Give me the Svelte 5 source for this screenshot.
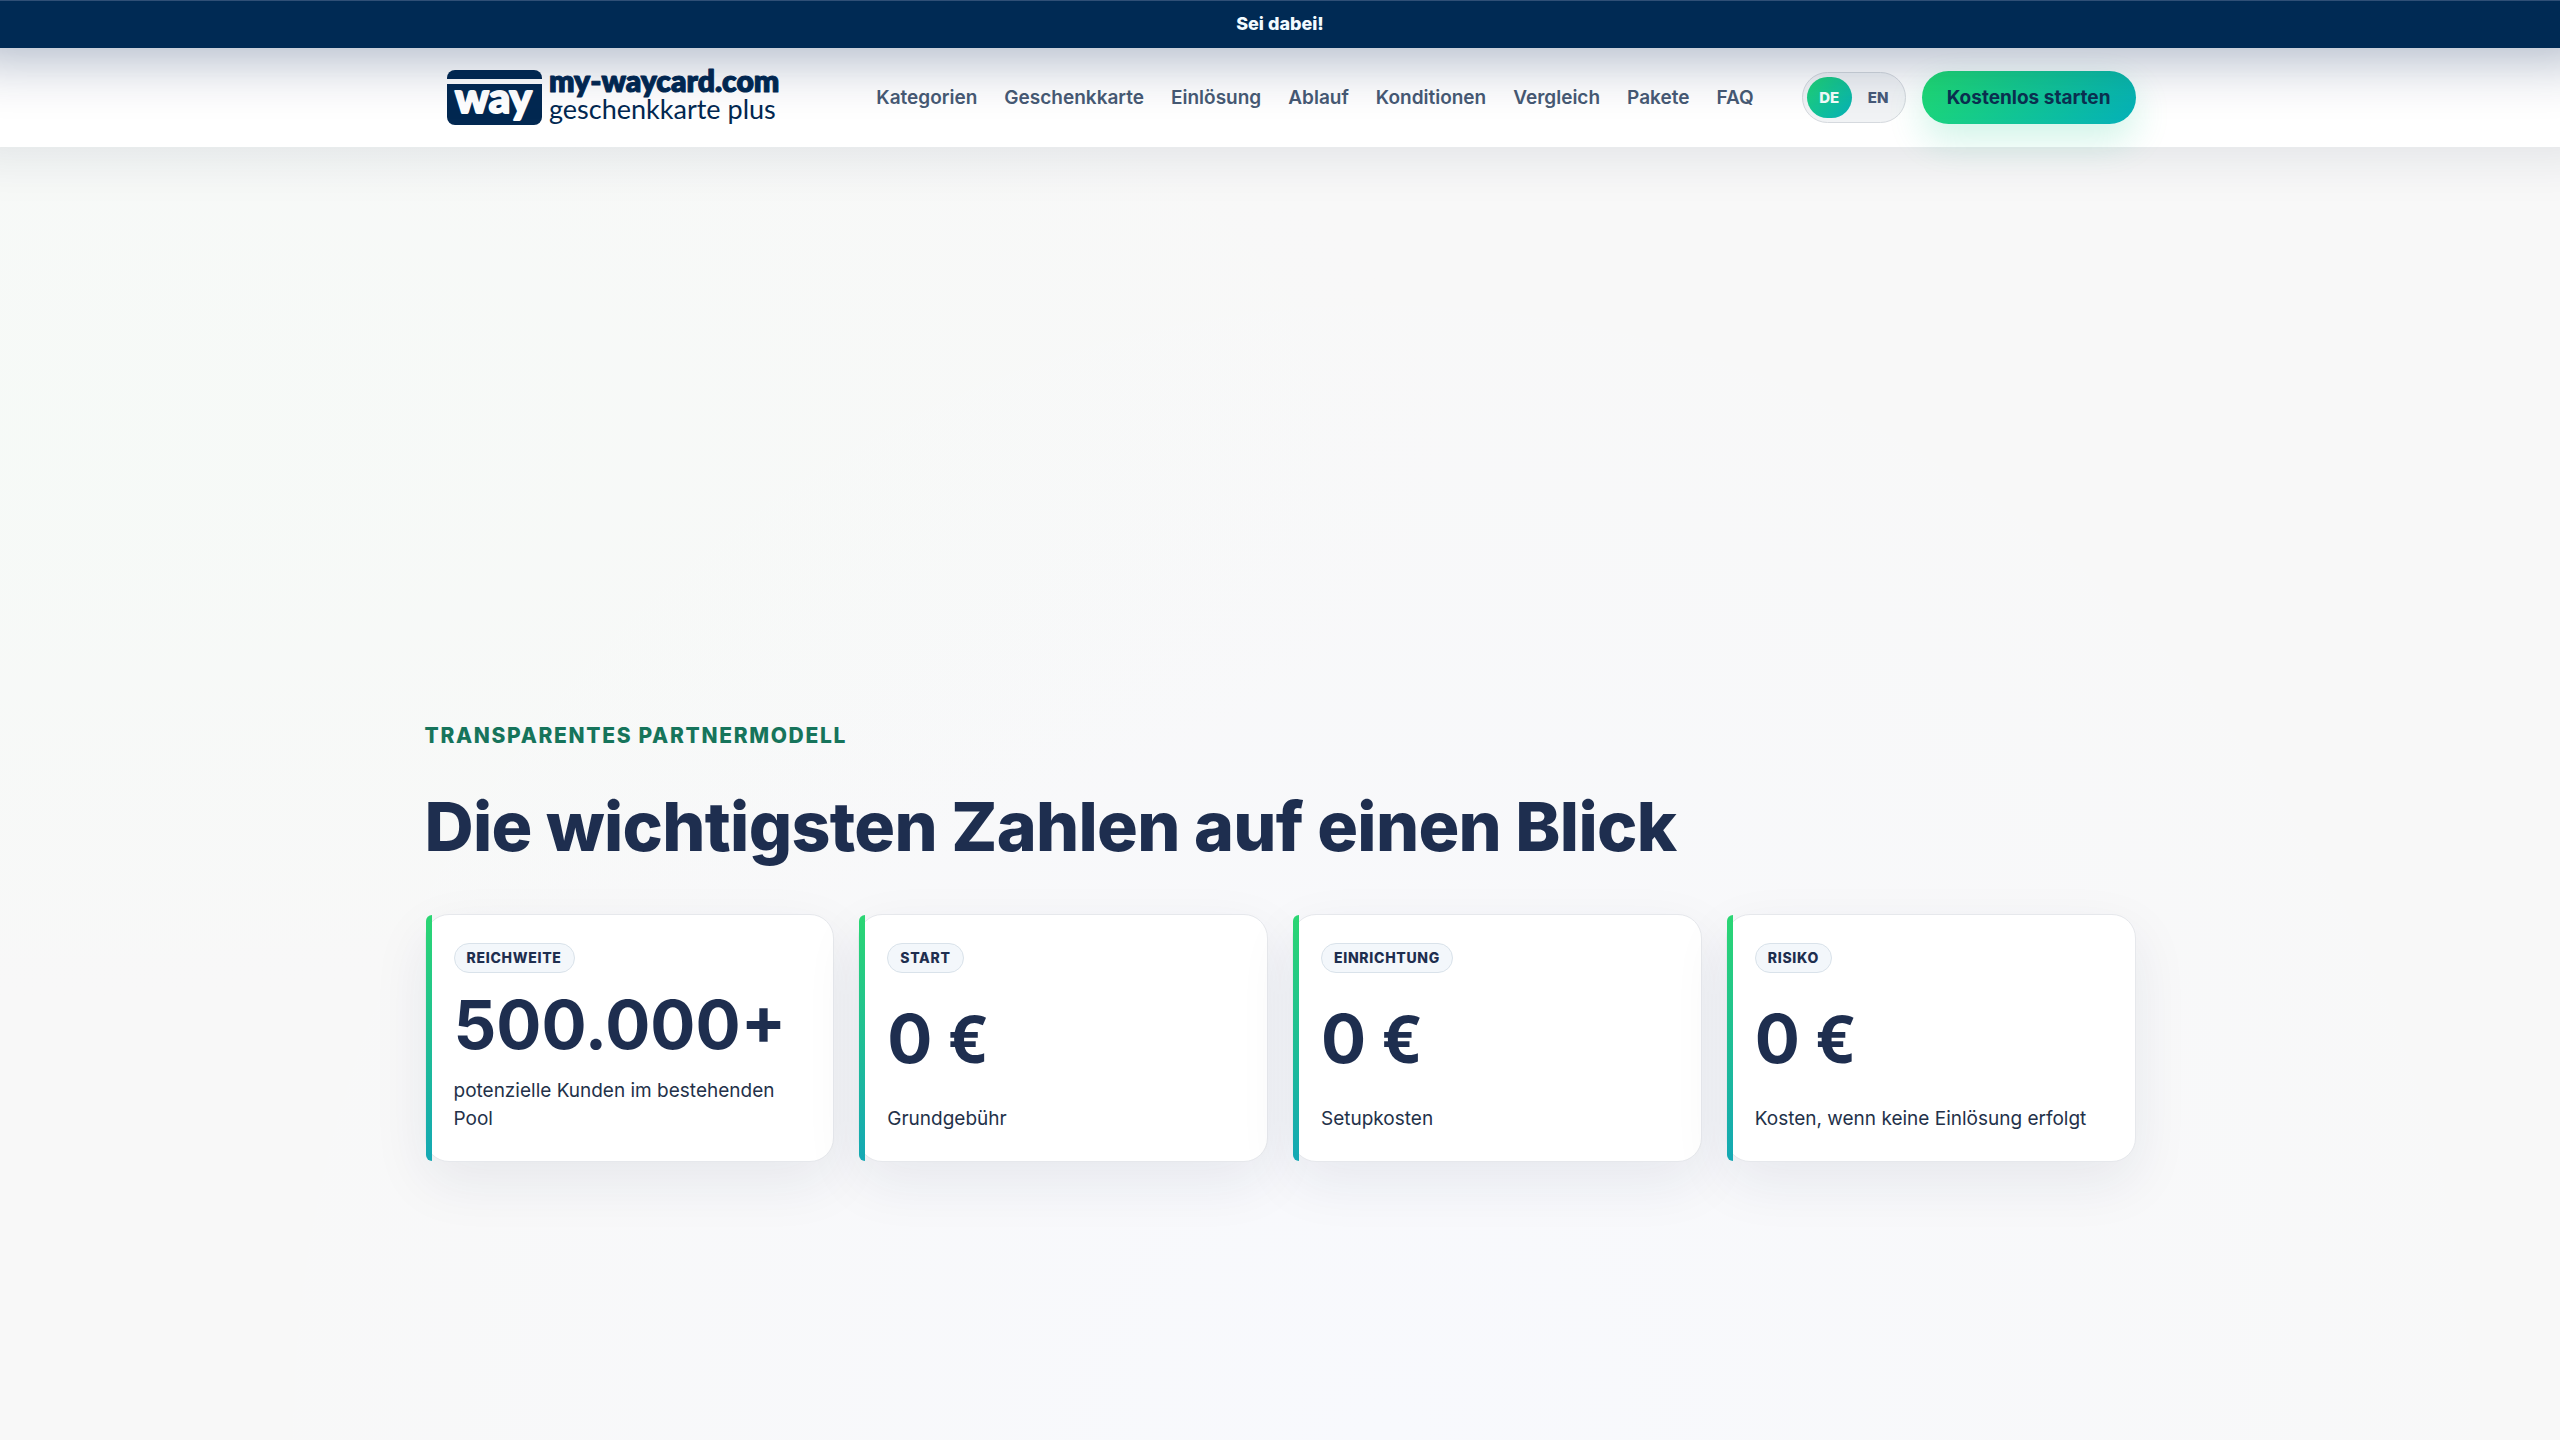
<script>
	const links = [
		{ label: 'Kategorien', href: '#kategorien' },
		{ label: 'Geschenkkarte', href: '#geschenkkarte' },
		{ label: 'Einlösung', href: '#einloesung' },
		{ label: 'Ablauf', href: '#ablauf' },
		{ label: 'Konditionen', href: '#konditionen' },
		{ label: 'Vergleich', href: '#vergleich' },
		{ label: 'Pakete', href: '#pakete' },
		{ label: 'FAQ', href: '#faq' }
	];

	const languages = ['DE', 'EN'];

	const stats = [
		{ tag: 'Reichweite', value: '500.000+', text: 'potenzielle Kunden im bestehenden Pool' },
		{ tag: 'Start', value: '0', unit: '€', text: 'Grundgebühr' },
		{ tag: 'Einrichtung', value: '0', unit: '€', text: 'Setupkosten' },
		{ tag: 'Risiko', value: '0', unit: '€', text: 'Kosten, wenn keine Einlösung erfolgt' }
	];

	let language = $state('DE');
</script>

<div class="page">
	<div class="announcement">Sei dabei!</div>

	<header>
		<div class="container bar">
			<a class="logo" href="#start" aria-label="my-waycard.com geschenkkarte plus">
				<svg width="336" height="76" viewBox="0 -6 336 76">
					<path class="navy" d="M0 13v-1a8 8 0 0 1 8-8h79a8 8 0 0 1 8 8v1z" />
					<path class="navy" d="M0 18h95v33a8 8 0 0 1-8 8H8a8 8 0 0 1-8-8z" />
					<text class="word" x="8" y="47">way</text>
					<text class="name" x="102" y="26">my-waycard.com</text>
					<text class="sub" x="102" y="53">geschenkkarte plus</text>
				</svg>
			</a>

			<nav>
				{#each links as link}
					<a href={link.href}>{link.label}</a>
				{/each}
			</nav>

			<div class="switch" role="group" aria-label="Sprache">
				{#each languages as code}
					<button
						type="button"
						class:active={language === code}
						aria-pressed={language === code}
						onclick={() => (language = code)}>{code}</button>
				{/each}
			</div>

			<a class="cta" href="#starten">Kostenlos starten</a>
		</div>
	</header>

	<main class="container">
		<p class="eyebrow">Transparentes Partnermodell</p>
		<h1>Die wichtigsten Zahlen auf einen Blick</h1>

		<div class="cards">
			{#each stats as stat}
				<article>
					<span class="tag">{stat.tag}</span>
					<strong>{stat.value}{#if stat.unit}&nbsp;<span class="unit">{stat.unit}</span>{/if}</strong>
					<p>{stat.text}</p>
				</article>
			{/each}
		</div>
	</main>
</div>

<style>
	:global(body) {
		margin: 0;
		background: #f8f8f9;
	}

	.page {
		min-height: 100vh;
		box-sizing: border-box;
		background:
			radial-gradient(ellipse at 0% 30%, rgba(246, 250, 247, 0.9), transparent 40%),
			radial-gradient(ellipse at 54% 100%, #f8f9fd, transparent 60%),
			#f8f8f8;
		color: #1e2e4f;
		font-family: Inter, "Liberation Sans", sans-serif;
	}

	.container {
		box-sizing: border-box;
		width: min(1711px, calc(100% - 48px));
		margin: 0 auto;
	}

	.announcement {
		position: relative;
		z-index: 2;
		box-sizing: border-box;
		border-top: 1px solid #2f4f76;
		padding: 11px 24px 12px;
		background: #002a54;
		box-shadow: 0 -28px 56px 40px rgba(0, 30, 80, 0.32);
		color: #f2fbff;
		font-size: 18px;
		font-weight: 800;
		line-height: 24px;
		text-align: center;
	}

	header {
		position: relative;
		z-index: 1;
		background: #fff;
		box-shadow: 0 -28px 48px 40px rgba(15, 35, 70, 0.09);
	}

	.bar {
		display: flex;
		align-items: center;
		min-height: 99px;
		padding-left: 22px;
	}

	.logo {
		display: flex;
		margin-right: auto;
	}

	.logo svg {
		display: block;
	}

	.navy {
		fill: #022851;
	}

	.logo text {
		stroke-linejoin: round;
		font-family: Lato, sans-serif;
	}

	.word {
		fill: #fff;
		stroke: #fff;
		stroke-width: 2px;
		font-size: 42px;
		font-weight: 900;
	}

	.name {
		fill: #022851;
		stroke: #022851;
		stroke-width: 1px;
		font-size: 30px;
		font-weight: 800;
	}

	.sub {
		fill: #022851;
		font-size: 27px;
		font-weight: 400;
	}

	nav {
		display: flex;
		gap: 27px;
		margin-right: 48px;
	}

	nav a {
		color: #475a74;
		font-size: 19px;
		font-weight: 600;
		line-height: 28px;
		text-decoration: none;
		white-space: nowrap;
	}

	.switch {
		display: flex;
		gap: 4px;
		margin-right: 16px;
		border: 1px solid #d5d9de;
		border-radius: 26px;
		padding: 4px;
		background: #f1f3f5;
	}

	.switch button {
		border: 0;
		border-radius: 21px;
		padding: 0 12px;
		height: 41px;
		min-width: 45px;
		background: none;
		color: #475a78;
		font-family: inherit;
		font-size: 15px;
		font-weight: 800;
		cursor: pointer;
	}

	.switch .active {
		background: linear-gradient(135deg, #20d673, #06b0b8);
		color: #f4fffc;
	}

	.cta {
		border-radius: 27px;
		padding: 13px 25px 12px;
		background: linear-gradient(135deg, #20dc70, #04b0ba);
		box-shadow: 0 16px 36px rgba(20, 200, 140, 0.2);
		color: #0b3050;
		font-size: 19px;
		font-weight: 700;
		line-height: 28px;
		text-decoration: none;
		white-space: nowrap;
	}

	main {
		padding: 573px 0 120px;
	}

	.eyebrow {
		margin: 0 0 38px;
		color: #16745b;
		font-size: 21px;
		font-weight: 800;
		letter-spacing: 0.08em;
		line-height: 32px;
		text-transform: uppercase;
	}

	h1 {
		margin: 0 0 52px;
		font-size: 68px;
		font-weight: 800;
		letter-spacing: -0.01em;
		line-height: 72px;
	}

	.cards {
		display: grid;
		grid-template-columns: repeat(4, 1fr);
		gap: 24px;
	}

	article {
		position: relative;
		display: flex;
		flex-direction: column;
		align-items: flex-start;
		justify-content: space-between;
		gap: 16px;
		border: 1px solid #e6e8ec;
		border-radius: 24px;
		padding: 28px;
		background: #fff;
		box-shadow: 0 20px 56px rgba(20, 40, 75, 0.08);
	}

	/* gradient edge */
	article::before {
		content: "";
		position: absolute;
		top: 0;
		bottom: 0;
		left: 0;
		width: 6px;
		border-radius: 6px 0 0 6px;
		background: linear-gradient(#2bd673, #14a8b4);
	}

	.tag {
		border: 1px solid #d9e2ea;
		border-radius: 15px;
		padding: 0 12px;
		background: #f3f7fb;
		font-size: 14px;
		font-weight: 800;
		letter-spacing: 0.05em;
		line-height: 28px;
		text-transform: uppercase;
	}

	strong {
		font-size: 67px;
		font-weight: 700;
		line-height: 72px;
	}

	.unit {
		font-family: "Noto Sans", sans-serif;
		line-height: 1;
	}

	article p {
		margin: 0;
		color: #233149;
		font-size: 19px;
		line-height: 28px;
	}

	@media (max-width: 1500px) {
		.bar {
			flex-wrap: wrap;
			gap: 16px;
		}

		.cards {
			grid-template-columns: repeat(auto-fit, minmax(380px, 1fr));
		}
	}
</style>
